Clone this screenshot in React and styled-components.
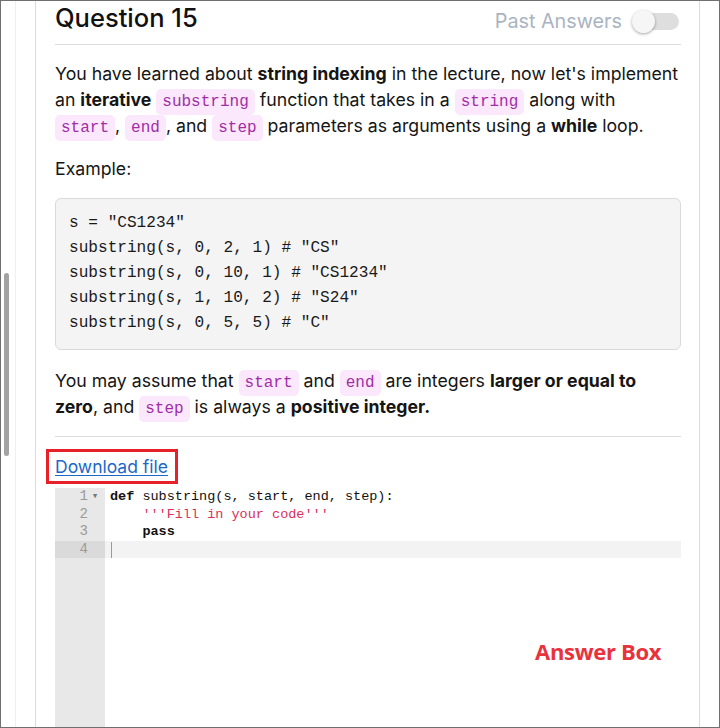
import React from 'react'
import styled, { createGlobalStyle } from 'styled-components'

const GlobalStyle = createGlobalStyle`
    html, body {
        margin: 0;
        padding: 0;
        background: #fff;
    }
    body {
        font-family: 'Inter', 'Liberation Sans', sans-serif;
        color: #111;
    }
`;

const lines = [
    { n: 1, fold: true, parts: [{ k: 'kw', t: 'def' }, { t: ' substring(s, start, end, step):' }] },
    { n: 2, parts: [{ t: '    ' }, { k: 'str', t: "'''Fill in your code'''" }] },
    { n: 3, parts: [{ t: '    ' }, { k: 'kw', t: 'pass' }] },
    { n: 4, active: true, parts: [] },
];

function App() {
    return (
        <>
            <GlobalStyle />
            <Frame>
                <ScrollRail>
                    <Thumb />
                </ScrollRail>
                <SideColumn />
                <Card>
                    <Header>
                        <Title>Question 15</Title>
                        <PastGroup>
                            <PastLabel>Past Answers</PastLabel>
                            <Toggle>
                                <Knob />
                            </Toggle>
                        </PastGroup>
                    </Header>

                    <Para $top={16}>
                        You have learned about <b>string indexing</b> in the lecture, now let's implement
                        an <b>iterative</b> <Chip>substring</Chip> function that takes in a <Chip>string</Chip> along with{' '}
                        <Chip>start</Chip>, <Chip>end</Chip>, and <Chip>step</Chip> parameters as arguments using a <b>while</b> loop.
                    </Para>
                    <Para $top={17}>Example:</Para>

                    <CodeBlock>
{`s = "CS1234"
substring(s, 0, 2, 1) # "CS"
substring(s, 0, 10, 1) # "CS1234"
substring(s, 1, 10, 2) # "S24"
substring(s, 0, 5, 5) # "C"`}
                    </CodeBlock>

                    <Para $top={18}>
                        You may assume that <Chip>start</Chip> and <Chip>end</Chip> are integers <b>larger or equal to
                        zero</b>, and <Chip>step</Chip> is always a <b>positive integer.</b>
                    </Para>

                    <Divider />

                    <HighlightBox>
                        <DownloadLink href="#">Download file</DownloadLink>
                    </HighlightBox>

                    <Editor>
                        <Gutter>
                            {lines.map(l => (
                                <GutterCell key={l.n} $active={l.active}>
                                    {l.n}
                                    <Fold>{l.fold ? '▾' : ''}</Fold>
                                </GutterCell>
                            ))}
                        </Gutter>
                        <CodeArea>
                            {lines.map(l => (
                                <CodeLine key={l.n} $active={l.active}>
                                    {l.parts.map((p, i) => (
                                        <Token key={i} $kind={p.k}>{p.t}</Token>
                                    ))}
                                    {l.active && <Cursor />}
                                </CodeLine>
                            ))}
                        </CodeArea>
                        <AnswerNote>Answer Box</AnswerNote>
                    </Editor>
                </Card>
            </Frame>
        </>
    )
}

const Frame = styled.div`
    width: 720px;
    height: 728px;
    box-sizing: border-box;
    border: 1px solid #6f6f6f;
    overflow: hidden;
    display: flex;
    background: #fff;
`;

const ScrollRail = styled.div`
    width: 14px;
    flex-shrink: 0;
    padding-top: 272px;
    box-sizing: border-box;
`;

const Thumb = styled.div`
    width: 5px;
    height: 183px;
    margin-left: 3px;
    border-radius: 3px;
    background: #a3a3a3;
`;

const SideColumn = styled.div`
    width: 19px;
    flex-shrink: 0;
    border-left: 1px solid #efefef;
`;

const Card = styled.div`
    width: 665px;
    flex-shrink: 0;
    box-sizing: border-box;
    border-left: 1px solid #dcdcdc;
    border-right: 1px solid #dcdcdc;
    padding: 0 18px 0 19px;
    position: relative;
`;

const Header = styled.div`
    display: flex;
    justify-content: space-between;
    align-items: flex-start;
    height: 43px;
    border-bottom: 1px solid #dedede;
`;

const Title = styled.div`
    font-size: 25.5px;
    font-weight: 500;
    line-height: 34px;
    color: #111;
`;

const PastGroup = styled.div`
    display: flex;
    align-items: center;
    margin-top: 4px;
    height: 32px;
    padding-right: 2px;
`;

const PastLabel = styled.span`
    font-size: 19.8px;
    color: #aab4c1;
    margin-right: 12px;
`;

const Toggle = styled.div`
    position: relative;
    width: 45px;
    height: 17px;
    border-radius: 9px;
    background: #dedede;
`;

const Knob = styled.div`
    position: absolute;
    left: -2px;
    top: -3px;
    width: 23px;
    height: 23px;
    border-radius: 50%;
    background: #f6f6f6;
    box-shadow: 0 1px 3px rgba(0, 0, 0, 0.35);
`;

const Para = styled.p`
    margin: ${p => p.$top}px 0 0;
    font-size: 17.7px;
    line-height: 26px;
    color: #151515;
    b {
        font-weight: 700;
    }
`;

const Chip = styled.code`
    font-family: 'Liberation Mono', 'DejaVu Sans Mono', monospace;
    font-size: 16px;
    line-height: 1;
    color: #a12ea6;
    background: #fbe8fd;
    border-radius: 5px;
    padding: 4px 6px;
`;

const CodeBlock = styled.pre`
    margin: 16px 0 0;
    padding: 12px 13px 13px;
    background: #f4f4f4;
    border: 1px solid #dadada;
    border-radius: 6px;
    font-family: 'Liberation Mono', 'DejaVu Sans Mono', monospace;
    font-size: 16.1px;
    line-height: 25px;
    color: #1a1a1a;
`;

const Divider = styled.div`
    margin-top: 16px;
    border-top: 1px solid #dedede;
`;

const HighlightBox = styled.div`
    display: inline-block;
    margin: 12px 0 0 -9px;
    padding: 2px 7px 2px 6px;
    border: 3px solid #e8202a;
`;

const DownloadLink = styled.a`
    font-size: 17.5px;
    line-height: 25px;
    color: #2068c8;
    text-decoration: underline;
    text-underline-offset: 2px;
`;

const Editor = styled.div`
    position: relative;
    display: flex;
    margin-top: 4px;
    height: 260px;
    font-family: 'Liberation Mono', 'DejaVu Sans Mono', monospace;
    font-size: 13.5px;
    line-height: 17.6px;
`;

const Gutter = styled.div`
    width: 50px;
    flex-shrink: 0;
    background: #e8e8e8;
`;

const GutterCell = styled.div`
    display: flex;
    justify-content: flex-end;
    padding-right: 3px;
    font-size: 14px;
    color: #9a9a9a;
    background: ${p => (p.$active ? '#dadada' : 'transparent')};
`;

const Fold = styled.span`
    width: 14px;
    text-align: center;
    font-size: 11px;
    color: #777;
`;

const CodeArea = styled.div`
    flex: 1;
`;

const CodeLine = styled.div`
    display: flex;
    align-items: center;
    height: 17.6px;
    padding-left: 5px;
    white-space: pre;
    background: ${p => (p.$active ? '#f3f3f3' : 'transparent')};
`;

const Token = styled.span`
    color: ${p => (p.$kind === 'str' ? '#d8305a' : '#111')};
    font-weight: ${p => (p.$kind === 'kw' ? 700 : 400)};
`;

const Cursor = styled.span`
    width: 1px;
    height: 16px;
    margin-left: 1px;
    background: #9a9a9a;
`;

const AnswerNote = styled.div`
    position: absolute;
    left: 480px;
    top: 155px;
    font-family: 'Open Sans', 'Liberation Sans', sans-serif;
    font-size: 22px;
    font-weight: 700;
    color: #e8323c;
    letter-spacing: -0.3px;
`;

export default App
